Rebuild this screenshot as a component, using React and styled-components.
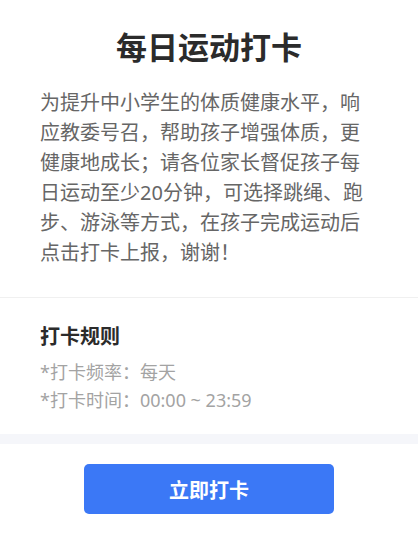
import React from "react";
import styled, { createGlobalStyle } from "styled-components";

const Global = createGlobalStyle`
  html, body { margin: 0; padding: 0; background: #fff; }
  body { font-family: "Noto Sans", "Noto Sans CJK SC", sans-serif; }
`;

const Page = styled.div`
  width: 418px;
  display: flex;
  flex-direction: column;
  background: #fff;
`;

const Intro = styled.section`
  padding: 27px 40px 29px;
  border-bottom: 1px solid #f0f0f0;
`;

const Title = styled.h1`
  margin: 0 0 21px;
  text-align: center;
  font-size: 31px;
  line-height: 40px;
  font-weight: 700;
  color: #2b2b2b;
`;

const Paragraph = styled.p`
  margin: 0;
  font-size: 20px;
  line-height: 30px;
  color: #666;
`;

const Rules = styled.section`
  padding: 25px 40px 20px;
`;

const RulesHeading = styled.h2`
  margin: 0 0 7px;
  font-size: 20px;
  line-height: 28px;
  font-weight: 700;
  color: #2b2b2b;
`;

const RuleLine = styled.div`
  font-size: 18px;
  line-height: 28px;
  color: #a3a3a3;
`;

const Band = styled.div`
  height: 10px;
  background: #f5f6fa;
`;

const Footer = styled.div`
  display: flex;
  justify-content: center;
  padding: 20px 0 21px;
`;

const Button = styled.button`
  width: 250px;
  height: 50px;
  border: none;
  border-radius: 5px;
  background: #3b78f6;
  color: #fff;
  font-family: inherit;
  font-size: 20px;
  font-weight: 700;
  cursor: pointer;
`;

export default function App() {
  return (
    <Page>
      <Global />
      <Intro>
        <Title>每日运动打卡</Title>
        <Paragraph>
          为提升中小学生的体质健康水平，响应教委号召，帮助孩子增强体质，更健康地成长；请各位家长督促孩子每日运动至少20分钟，可选择跳绳、跑步、游泳等方式，在孩子完成运动后点击打卡上报，谢谢！
        </Paragraph>
      </Intro>
      <Rules>
        <RulesHeading>打卡规则</RulesHeading>
        <RuleLine>*打卡频率：每天</RuleLine>
        <RuleLine>*打卡时间：00:00 ~ 23:59</RuleLine>
      </Rules>
      <Band />
      <Footer>
        <Button>立即打卡</Button>
      </Footer>
    </Page>
  );
}
